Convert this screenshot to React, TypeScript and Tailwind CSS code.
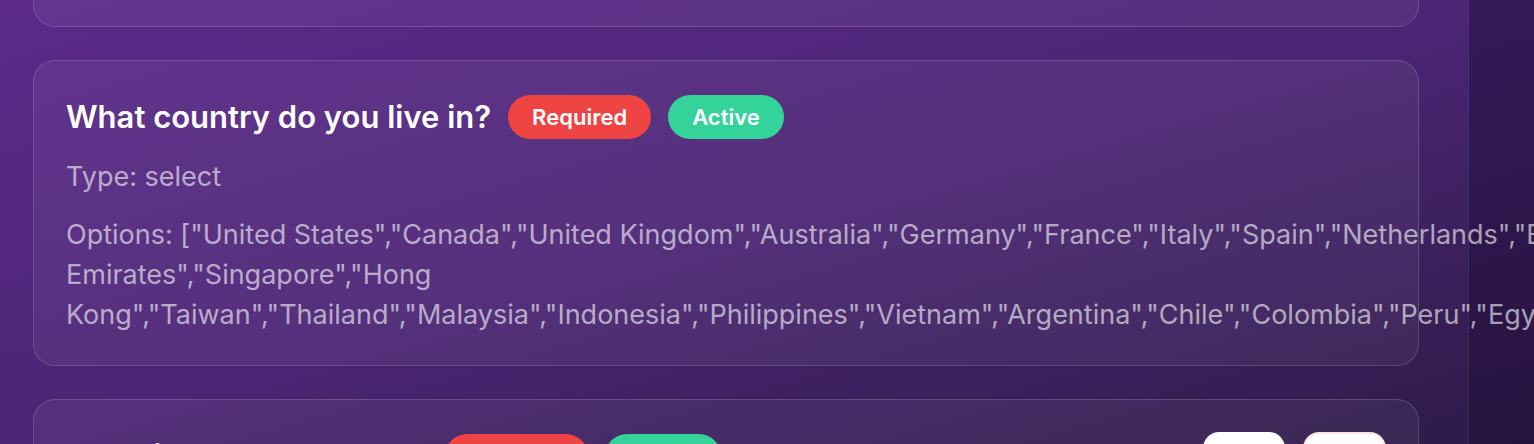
import { Pencil, Trash2 } from 'lucide-react';

type Question = {
  title: string;
  type: string;
  options?: string[];
  required: boolean;
  active: boolean;
};

const questions: Question[] = [
  {
    title: 'What is your email address?',
    type: 'email',
    required: true,
    active: true,
  },
  {
    title: 'What country do you live in?',
    type: 'select',
    required: true,
    active: true,
    options: [
      'United States', 'Canada', 'United Kingdom', 'Australia', 'Germany', 'France', 'Italy', 'Spain',
      'Netherlands', 'Belgium', 'Switzerland', 'Sweden', 'Norway', 'Denmark', 'Japan', 'South Korea',
      'United Arab Emirates', 'Singapore', 'Hong Kong', 'Taiwan', 'Thailand', 'Malaysia', 'Indonesia',
      'Philippines', 'Vietnam', 'Argentina', 'Chile', 'Colombia', 'Peru', 'Egypt', 'Morocco', 'Nigeria',
      'Kenya', 'Ghana', 'Israel', 'Turkey', 'Greece', 'Portugal', 'Poland', 'Other',
    ],
  },
  {
    title: 'What is your age range?',
    type: 'select',
    required: true,
    active: true,
    options: ['18-24', '25-34', '35-44', '45-54', '55+'],
  },
];

// long option lists are allowed to run past the card, like the live page does
const QuestionCard = ({ q }: { q: Question }) => (
  <div className="flex items-start justify-between gap-4 rounded-[22px] border border-white/15 bg-white/[0.05] px-8 pt-8 pb-[30px]">
    <div className="flex-1">
      <div className="flex items-center gap-[17px] mb-4">
        <h3 className="text-[31px] leading-[48px] font-semibold text-white">{q.title}</h3>
        {q.required && (
          <span className="rounded-full bg-[#ef4444] px-6 py-2 text-[22px] leading-7 font-semibold text-white">
            Required
          </span>
        )}
        {q.active && (
          <span className="rounded-full bg-[#34d399] px-6 py-2 text-[22px] leading-7 font-semibold text-white">
            Active
          </span>
        )}
      </div>
      <div className="space-y-[18px] text-[27px] leading-[40px] text-white/60">
        <p>Type: {q.type}</p>
        {q.options && <p>Options: {JSON.stringify(q.options)}</p>}
      </div>
    </div>
    <div className="flex shrink-0 gap-[18px]">
      <button className="flex h-12 w-[82px] items-center justify-center rounded-2xl bg-white text-[#6b21a8]">
        <Pencil size={20} />
      </button>
      <button className="flex h-12 w-[83px] items-center justify-center rounded-2xl border-2 border-[#fee2e2] bg-white text-[#ef4444]">
        <Trash2 size={20} />
      </button>
    </div>
  </div>
);

export default function App() {
  return (
    <div
      className="flex h-[444px] w-full overflow-hidden bg-linear-to-br from-[#5d2a8c] via-[#4b2574] to-[#2d1b47]"
      style={{ fontFamily: 'Inter, "Noto Sans", sans-serif' }}
    >
      {/* main sits above the side panel so overflowing text isn't dimmed */}
      <main className="relative z-10 min-w-0 flex-1 pl-[33px] pr-[49px]">
        <div className="-mt-[141px] flex flex-col gap-[33px]">
          {questions.map((q) => (
            <QuestionCard key={q.title} q={q} />
          ))}
        </div>
      </main>
      <aside className="w-[66px] shrink-0 border-l border-white/10 bg-[#1c0c36]/45" />
    </div>
  );
}
